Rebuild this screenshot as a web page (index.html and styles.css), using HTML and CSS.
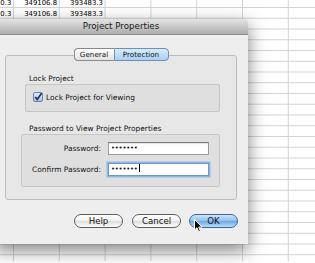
FILE: index.html
```html
<!DOCTYPE html>
<html>
<head>
<title>Project Properties</title>
<link rel="stylesheet" href="styles.css">
</head>
<body>
  <div class="sheet">
    <div class="sheet-row">
      <span class="cell">0.3</span>
      <span class="cell">349106.8</span>
      <span class="cell">393483.3</span>
    </div>
    <div class="sheet-row">
      <span class="cell">0.3</span>
      <span class="cell">349106.8</span>
      <span class="cell">393483.3</span>
    </div>
  </div>

  <div class="window">
    <div class="titlebar">Project Properties</div>

    <div class="window-body">
      <div class="tabs">
        <div class="tab tab-general">General</div>
        <div class="tab tab-protection active">Protection</div>
      </div>

      <div class="panel">
        <div class="group-label">Lock Project</div>
        <div class="group group-lock">
          <svg class="checkbox" width="10" height="10" viewBox="0 0 10 10">
            <defs>
              <linearGradient id="cbfill" x1="0" y1="0" x2="0" y2="1">
                <stop offset="0" stop-color="#e4effa"/>
                <stop offset="1" stop-color="#9cc3ea"/>
              </linearGradient>
            </defs>
            <rect x="0.5" y="0.5" width="9" height="9" rx="1.5" fill="url(#cbfill)" stroke="#6d84a3"/>
            <path d="M2.2 4.9 L4.2 7.4 L8.6 1.2" fill="none" stroke="#1d2c52" stroke-width="1.6"/>
          </svg>
          <span>Lock Project for Viewing</span>
        </div>

        <div class="group-label second">Password to View Project Properties</div>
        <div class="group group-password">
          <label class="field-label">Password:</label>
          <div class="field">&bull;&bull;&bull;&bull;&bull;&bull;&bull;</div>
          <label class="field-label">Confirm Password:</label>
          <div class="field focused">&bull;&bull;&bull;&bull;&bull;&bull;&bull;<span class="caret"></span></div>
        </div>
      </div>

      <div class="buttons">
        <button class="btn btn-help">Help</button>
        <button class="btn btn-cancel">Cancel</button>
        <button class="btn btn-ok">OK</button>
      </div>
    </div>
  </div>

  <svg class="cursor" width="9" height="14" viewBox="0 0 9 14">
    <path d="M0.5 0.5 L0.5 11 L3 8.7 L4.8 12.8 L6.4 12.1 L4.7 8.1 L8 8.1 Z" fill="#000" stroke="#fff" stroke-width="1"/>
  </svg>
</body>
</html>
```

FILE: styles.css
```css
body {
  margin: 0;
  width: 315px;
  height: 263px;
  overflow: hidden;
  background-color: #fff;
  font-family: "DejaVu Sans", sans-serif;
  color: #111;
  position: relative;
}

/* spreadsheet behind the dialog */

.sheet {
  height: 263px;
  background-image:
    linear-gradient(to right, #d2d2d2 1px, transparent 1px),
    linear-gradient(to bottom, #d2d2d2 1px, transparent 1px);
  background-size: 45.8px 100%, 100% 10.75px;
  background-position: 13px 0, 0 9px;
}

.sheet-row {
  display: grid;
  grid-template-columns: 13.3px repeat(3, 45.8px);
  height: 10.75px;
  font-size: 6.9px;
  line-height: 10.75px;
  color: #000;
}

.sheet-row:first-child {
  margin-top: -1.75px;
}

.cell {
  text-align: right;
  padding-right: 2px;
  overflow: hidden;
  white-space: nowrap;
}

/* dialog window */

.window {
  position: absolute;
  left: -6px;
  top: 19px;
  width: 254px;
  height: 225px;
  background-color: #eeeeee;
  border-radius: 4px 4px 0 0;
  box-shadow: 0 6px 18px rgba(0, 0, 0, 0.5);
}

.titlebar {
  box-sizing: border-box;
  height: 16px;
  line-height: 15px;
  text-align: center;
  font-size: 8.7px;
  color: #1a1a1a;
  background: linear-gradient(#e4e4e4, #adadad);
  border-bottom: 1px solid #8e8e8e;
  border-radius: 4px 4px 0 0;
}

.window-body {
  padding: 13px 11px 0;
}

.tabs {
  display: flex;
  justify-content: center;
  position: relative;
  z-index: 1;
  height: 13px;
}

.tab {
  box-sizing: border-box;
  height: 13px;
  line-height: 11px;
  font-size: 7.2px;
  text-align: center;
  border: 1px solid #8a8a8a;
  background: linear-gradient(#ffffff, #e2e2e2);
}

.tab-general {
  width: 40px;
  border-radius: 4px 0 0 4px;
  border-right: none;
}

.tab-protection {
  width: 55px;
  border-radius: 0 4px 4px 0;
}

.tab.active {
  background: linear-gradient(#d8ebfc, #a8d0f3);
  border-color: #6f8fb3;
}

.panel {
  box-sizing: border-box;
  margin-top: -6px;
  height: 145px;
  border: 1px solid #bdbdbd;
  border-radius: 3px;
  background-color: #e7e7e7;
  overflow: hidden;
}

.group-label {
  font-size: 7.45px;
  line-height: 9px;
  margin: 18px 0 1px 23px;
}

.group-label.second {
  margin-top: 12px;
}

.group {
  box-sizing: border-box;
  border: 1px solid #c6c6c6;
  border-radius: 2px;
  background-color: #dfdfdf;
  font-size: 7.45px;
}

.group-lock {
  height: 28px;
  margin: 0 16px 0 19px;
  padding: 0 0 2px 7px;
  display: flex;
  align-items: center;
  gap: 3px;
}

.checkbox {
  display: block;
  flex: none;
}

.group-password {
  height: 53px;
  margin: 0 16px 0 15px;
  padding: 7px 0 0 10px;
  display: grid;
  grid-template-columns: 69px 101px;
  column-gap: 7px;
  row-gap: 8px;
  align-content: start;
  align-items: center;
}

.field-label {
  text-align: right;
  line-height: 13px;
}

.field {
  box-sizing: border-box;
  height: 13px;
  padding-left: 2px;
  font-size: 6.8px;
  line-height: 11px;
  letter-spacing: -0.2px;
  background-color: #fff;
  border: 1px solid #9c9c9c;
  border-top-color: #7c7c7c;
  box-shadow: inset 0 1px 1px rgba(0, 0, 0, 0.12);
}

.field.focused {
  border-color: #6d97c9;
  box-shadow: 0 0 0 1.5px #8fb7e4;
}

.caret {
  display: inline-block;
  width: 1px;
  height: 8px;
  margin-left: 1px;
  vertical-align: -1px;
  background-color: #000;
}

.buttons {
  display: flex;
  justify-content: flex-end;
  margin: 14px -1px 0 0;
}

.btn {
  box-sizing: border-box;
  width: 49px;
  height: 14px;
  padding: 0;
  font-family: "DejaVu Sans", sans-serif;
  font-size: 8.6px;
  line-height: 12px;
  color: #111;
  border: 1px solid #5c5c5c;
  border-radius: 7px;
  background: linear-gradient(#ffffff, #f0f0f0 50%, #dedede 51%, #fbfbfb);
}

.btn-help {
  margin-right: 9px;
}

.btn-cancel {
  margin-right: 8px;
}

.btn-ok {
  border-color: #3f6593;
  background: linear-gradient(#cde4f9, #8ec0ee 50%, #6aa8e6 51%, #b6dcfa);
}

.cursor {
  position: absolute;
  left: 194px;
  top: 219px;
}
```
